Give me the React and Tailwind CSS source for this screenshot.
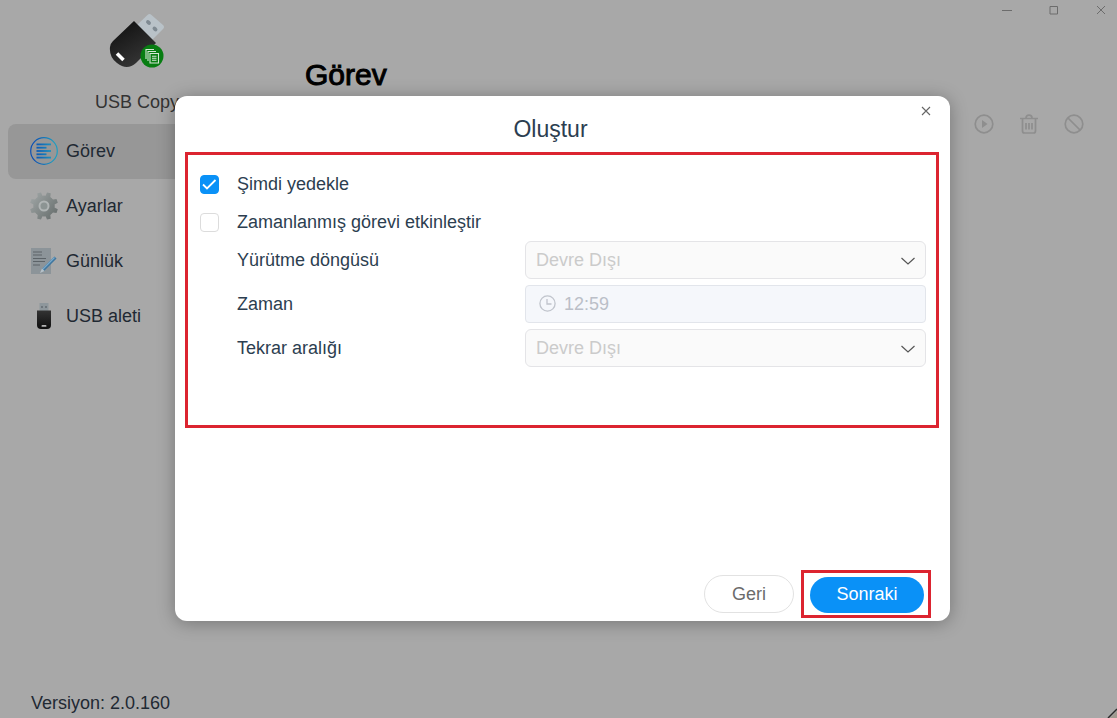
import React, { useState } from "react";

const LogoIcon = () => (
  <svg width="56" height="56" viewBox="0 0 56 56">
    <defs>
      <linearGradient id="body" x1="0" y1="0" x2="0.6" y2="1">
        <stop offset="0" stopColor="#0c0c0c" />
        <stop offset="1" stopColor="#363636" />
      </linearGradient>
    </defs>
    <path d="M28 12 L38.500 2 Q40.500 0 42.500 2 L54 12 Q56 14 54 16 L43 27 Z" fill="#b9c2c8" />
    <ellipse cx="39.500" cy="9.500" rx="2.800" ry="1.900" transform="rotate(42 39.500 9.500)" fill="#7f8a92" />
    <ellipse cx="46" cy="16" rx="2.800" ry="1.900" transform="rotate(42 46 16)" fill="#7f8a92" />
    <path d="M25 8 L47 30 L27 50 Q18 58 8 50 Q0 44 1 34 Q1 31 4 28 Z" fill="url(#body)" />
    <path d="M8 40.500 L14.500 47" stroke="#fff" strokeWidth="3.600" />
    <circle cx="43" cy="43" r="11.500" fill="#087d12" />
    <g fill="none" stroke="#d5e6d5" strokeWidth="1.100">
      <path d="M37 46 V36.500 H45" />
      <path d="M39 48 V38.500 H47" />
      <path d="M41 40.500 H49.500 V50 H41 Z" fill="#087d12" />
      <path d="M43 43.300 H47.500 M43 45.300 H47.500 M43 47.300 H47.500" />
    </g>
  </svg>
);

const TaskIcon = () => (
  <svg width="28" height="28" viewBox="0 0 28 28">
    <defs>
      <linearGradient id="task" gradientUnits="userSpaceOnUse" x1="4" y1="0" x2="24" y2="0">
        <stop offset="0" stopColor="#0a50b4" />
        <stop offset="1" stopColor="#1f9cc0" />
      </linearGradient>
    </defs>
    <circle cx="14" cy="14" r="13.300" fill="none" stroke="url(#task)" strokeWidth="1.200" />
    <g fill="url(#task)">
      <rect x="6.500" y="6.500" width="14.500" height="1.800" />
      <rect x="6.500" y="9.800" width="10" height="1.800" />
      <rect x="6.500" y="13.100" width="14.500" height="1.800" />
      <rect x="6.500" y="16.400" width="10" height="1.800" />
      <rect x="6.500" y="19.700" width="14.500" height="1.800" />
    </g>
  </svg>
);

const GearIcon = () => (
  <svg width="28" height="28" viewBox="0 0 28 28">
    <defs>
      <linearGradient id="gear" gradientUnits="userSpaceOnUse" x1="2" y1="4" x2="26" y2="24">
        <stop offset="0" stopColor="#9da3a3" />
        <stop offset="1" stopColor="#69706f" />
      </linearGradient>
    </defs>
    <g fill="url(#gear)">
      <circle cx="14" cy="14" r="10.500" />
      {/* all teeth in one path so the gradient stays continuous */}
      <path d="M7.700 5 L7.300 1.300 L11 0.500 L12.500 4 H15.500 L17 0.500 L20.700 1.300 L20.300 5 L23 7.500 L26.500 7 L27.800 10.800 L24.500 12.500 V15.500 L27.800 17.200 L26.500 21 L23 20.500 L20.300 23 L20.700 26.700 L17 27.500 L15.500 24 H12.500 L11 27.500 L7.300 26.700 L7.700 23 L5 20.500 L1.500 21 L0.200 17.200 L3.500 15.500 V12.500 L0.200 10.800 L1.500 7 L5 7.500 Z" />
    </g>
    <circle cx="14" cy="14" r="4.500" fill="#8c9493" stroke="#b0b5b5" strokeWidth="2" />
  </svg>
);

const LogIcon = () => (
  <svg width="28" height="28" viewBox="0 0 28 28">
    <path d="M1 1 H21 V27 H1 Z" fill="#8c9499" />
    <path
      d="M3 5 H12 M3 8 H12 M3 11.500 H16 M3 14.500 H15 M3 18 H10"
      stroke="#5c6368"
      strokeWidth="1.200"
    />
    <path d="M25.500 10.500 L13 23" stroke="#3f769f" strokeWidth="3" />
    <path d="M24.500 10.500 L12.500 22.500" stroke="#78a9cb" strokeWidth="1.200" />
    <path d="M12 21.500 L14.500 24 L10 26 Z" fill="#b6c2ca" />
  </svg>
);

const UsbIcon = () => (
  <svg width="28" height="28" viewBox="0 0 28 28">
    <defs>
      <linearGradient id="stick" x1="0" y1="0" x2="0" y2="1">
        <stop offset="0" stopColor="#333" />
        <stop offset="1" stopColor="#0f0f0f" />
      </linearGradient>
    </defs>
    <rect x="9.500" y="1" width="9" height="8" fill="#8e979c" />
    <path d="M11 5 H13 M15 5 H17" stroke="#646c71" strokeWidth="1.600" />
    <path d="M7 8.500 H21 V23 Q21 27 17 27 H11 Q7 27 7 23 Z" fill="url(#stick)" />
    <rect x="11.500" y="23" width="5" height="1.800" rx="0.900" fill="#b5b5b5" />
  </svg>
);

const PlayIcon = () => (
  <svg width="20" height="20" viewBox="0 0 20 20">
    <circle cx="10" cy="10" r="8.800" fill="none" stroke="currentColor" strokeWidth="1.700" />
    <path d="M8 6 L13.500 10 L8 14 Z" fill="currentColor" />
  </svg>
);

const TrashIcon = () => (
  <svg width="20" height="20" viewBox="0 0 20 20" fill="none" stroke="currentColor" strokeWidth="1.700">
    <path d="M1 4.500 H19 M7 4 Q7 1.200 10 1.200 Q13 1.200 13 4" />
    <path d="M3.500 5 V17 Q3.500 19 5.500 19 H14.500 Q16.500 19 16.500 17 V5" />
    <path d="M7 9 V15.500 M10 9 V15.500 M13 9 V15.500" />
  </svg>
);

const BanIcon = () => (
  <svg width="20" height="20" viewBox="0 0 20 20" fill="none" stroke="currentColor" strokeWidth="1.700">
    <circle cx="10" cy="10" r="8.800" />
    <path d="M4 4 L16 16" />
  </svg>
);

const menu = [
  { name: "Görev", icon: <TaskIcon /> },
  { name: "Ayarlar", icon: <GearIcon /> },
  { name: "Günlük", icon: <LogIcon /> },
  { name: "USB aleti", icon: <UsbIcon /> },
];

const CheckRow = ({ id, label, checked, onChange }) => (
  <div className="flex h-[38px] items-center gap-[18px]">
    <span className="relative flex">
      <input
        id={id}
        type="checkbox"
        checked={checked}
        onChange={onChange}
        className="peer size-[19px] appearance-none rounded-[4px] border border-[#dcdcdc] bg-white checked:border-[#0a91f7] checked:bg-[#0a91f7]"
      />
      <svg
        viewBox="0 0 19 19"
        className="pointer-events-none absolute inset-0 hidden size-[19px] peer-checked:block"
      >
        <path d="M3 9.500 L7 13.500 L15.500 5" fill="none" stroke="#fff" strokeWidth="1.800" />
      </svg>
    </span>
    <label htmlFor={id}>{label}</label>
  </div>
);

const SelectRow = ({ id, label }) => (
  <div className="grid grid-cols-[288px_1fr] items-center pl-[37px]">
    <label htmlFor={id}>{label}</label>
    <div className="relative">
      <select
        id={id}
        disabled
        className="block h-[38px] w-full appearance-none rounded-md border border-[#e4e4e7] bg-[#fafafa] px-[10px] pb-px text-[#cbcbcb] opacity-100"
      >
        <option>Devre Dışı</option>
      </select>
      <svg
        viewBox="0 0 14 8"
        className="pointer-events-none absolute top-4 right-[11px] h-2 w-[14px]"
      >
        <path d="M0.500 1 L7 7 L13.500 1" fill="none" stroke="#555" strokeWidth="1.200" />
      </svg>
    </div>
  </div>
);

const CreateDialog = () => {
  const [backupNow, setBackupNow] = useState(true);
  const [scheduled, setScheduled] = useState(false);

  return (
    <div
      role="dialog"
      aria-labelledby="dialog-title"
      className="relative w-full max-w-[775px] rounded-xl bg-white pb-[3px] text-[#2c3e50] shadow-[0_2px_18px_rgba(0,0,0,0.3)]"
    >
      <h2 id="dialog-title" className="pt-[17px] pr-6 pb-[7px] text-center text-[23px] leading-8">
        Oluştur
      </h2>
      <button aria-label="Kapat" className="absolute top-[9px] right-[18px] p-px text-[#666]">
        <svg width="10" height="10" viewBox="0 0 10 10">
          <path d="M1 1 L9 9 M9 1 L1 9" stroke="currentColor" strokeWidth="1.100" />
        </svg>
      </button>

      <form className="mr-[11px] ml-[10px] border-3 border-[#dc2430] pt-[10px] pr-[10px] pb-[58px] pl-3">
        <CheckRow
          id="backup-now"
          label="Şimdi yedekle"
          checked={backupNow}
          onChange={(e) => setBackupNow(e.target.checked)}
        />
        <CheckRow
          id="scheduled"
          label="Zamanlanmış görevi etkinleştir"
          checked={scheduled}
          onChange={(e) => setScheduled(e.target.checked)}
        />
        <div className="flex flex-col gap-[6px]">
          <SelectRow id="cycle" label="Yürütme döngüsü" />
          <div className="grid grid-cols-[288px_1fr] items-center pl-[37px]">
            <label htmlFor="time">Zaman</label>
            <div className="relative">
              <svg
                viewBox="0 0 17 17"
                className="absolute top-[10px] left-[14px] size-[17px] text-[#c0c4cc]"
                fill="none"
                stroke="currentColor"
                strokeWidth="1.300"
              >
                <circle cx="8.500" cy="8.500" r="7.600" />
                <path d="M8 4 V9 H12.500" />
              </svg>
              <input
                id="time"
                type="text"
                value="12:59"
                disabled
                readOnly
                className="block h-[38px] w-full rounded border border-[#e2e5eb] bg-[#f5f7fb] pl-[38px] text-[#bbbfc8]"
              />
            </div>
          </div>
          <SelectRow id="interval" label="Tekrar aralığı" />
        </div>
      </form>

      <div className="mt-[142px] mr-[19px] flex items-center justify-end gap-[7px]">
        <button className="h-[38px] w-[90px] rounded-full border border-[#e2e2e2] text-[#6b6b6b]">
          Geri
        </button>
        <div className="border-3 border-[#dc2430] pt-1 pr-1 pb-[2px] pl-[6px]">
          <button className="block h-9 w-[114px] rounded-full bg-[#0a91f7] pb-[2px] text-white">
            Sonraki
          </button>
        </div>
      </div>
    </div>
  );
};

const App = () => {
  return (
    <div className="relative flex min-h-screen bg-[#a8a8a8] font-['Liberation_Sans',Arial,sans-serif] text-[18px] leading-6 text-[#1f2933]">
      <aside className="flex w-[274px] shrink-0 flex-col">
        <div className="flex flex-col items-center pt-[13px] text-[#333]">
          <LogoIcon />
          <p className="mt-[21px]">USB Copy</p>
        </div>
        <nav className="mt-[10px] flex flex-col px-2">
          {menu.map((item, index) => (
            <a
              key={item.name}
              href="#"
              className={
                index === 0
                  ? "flex h-[55px] items-center gap-2 rounded-lg bg-[#979797] pb-[2px] pl-[22px]"
                  : "flex h-[55px] items-center gap-2 rounded-lg pb-[2px] pl-[22px]"
              }
            >
              {item.icon}
              <span>{item.name}</span>
            </a>
          ))}
        </nav>
        <p className="mt-auto pb-[3px] pl-[31px]">Versiyon: 2.0.160</p>
      </aside>

      <main className="flex flex-1 flex-col">
        <div className="flex justify-end gap-[37px] pt-[5px] pr-[11px] text-[#6c6c6c]">
          <button aria-label="Küçült">
            <svg width="10" height="10" viewBox="0 0 10 10" fill="none" stroke="currentColor">
              <path d="M0 5.500 H10" />
            </svg>
          </button>
          <button aria-label="Büyüt">
            <svg width="10" height="10" viewBox="0 0 10 10" fill="none" stroke="currentColor">
              <path d="M1 1.500 H8.500 V9 H1 Z" />
            </svg>
          </button>
          <button aria-label="Pencereyi kapat">
            <svg width="10" height="10" viewBox="0 0 10 10" fill="none" stroke="currentColor">
              <path d="M1 1 L9 9 M9 1 L1 9" />
            </svg>
          </button>
        </div>
        <h1 className="mt-[42px] pl-[31px] text-[30px] leading-9 text-black [-webkit-text-stroke:1px]">
          Görev
        </h1>
        <div className="mt-[21px] flex justify-end gap-[25px] pr-[33px] text-[#8e8e8e]">
          <button aria-label="Başlat">
            <PlayIcon />
          </button>
          <button aria-label="Sil">
            <TrashIcon />
          </button>
          <button aria-label="Devre dışı bırak">
            <BanIcon />
          </button>
        </div>
      </main>

      <svg className="absolute right-0 bottom-0" width="10" height="10" viewBox="0 0 10 10">
        <path d="M10 3 V10 H3 Z" fill="#a09a90" />
        <path d="M1 10 L10 1" stroke="#2b2b2b" strokeWidth="1.500" />
      </svg>

      <div className="absolute inset-0 flex items-start justify-center pt-24 pl-2">
        <CreateDialog />
      </div>
    </div>
  );
};

export default App;
